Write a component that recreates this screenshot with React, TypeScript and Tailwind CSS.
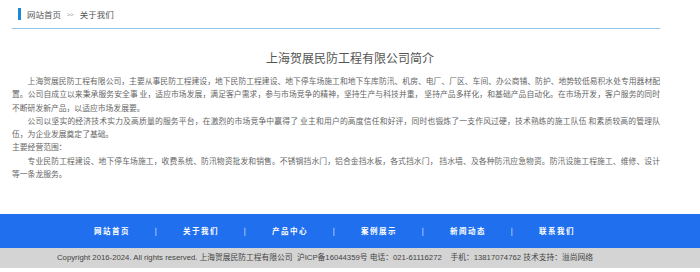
import React from 'react';

const NAV = ['网站首页', '关于我们', '产品中心', '案例展示', '新闻动态', '联系我们'];

const cjk = "font-['Noto_Sans_CJK_SC',sans-serif]";

const App: React.FC = () => {
  return (
    <div className={`w-[700px] h-[272px] flex flex-col bg-white ${cjk}`}>
      <main className="flex-1">
        {/* Breadcrumb */}
        <div className="ml-[12px] w-[648px] h-[29px] pt-[8px] border-b-[1.5px] border-[#8ec5e8]">
          <div className="ml-[6px] flex items-center h-[12px] border-l-[3px] border-[#1a8ad4] pl-[6px] text-[8.5px] text-[#555]">
            <span>网站首页</span>
            <span className="mx-[6px] text-[6px] text-[#999]">&gt;&gt;</span>
            <span>关于我们</span>
          </div>
        </div>

        {/* Intro */}
        <h1 className="mt-[22px] text-center text-[12px] leading-[14px] text-[#555]">上海贺展民防工程有限公司简介</h1>
        <div className="ml-[12px] w-[648px] mt-[9px] text-[7.8px] leading-[13.3px] text-[#666] text-justify">
          <p className="indent-[2em]">
            上海贺展民防工程有限公司，主要从事民防工程建设，地下民防工程建设、地下停车场施工和地下车库防汛、机房、电厂、厂区、车间、办公商铺、防护、地势较低易积水处专用器材配置。公司自成立以来秉承服务安全事 业，适应市场发展，满足客户需求，参与市场竞争的精神，坚持生产与科技并重， 坚持产品多样化，和基础产品自动化。在市场开发，客户服务的同时不断研发新产品，以适应市场发展要。
          </p>
          <p className="indent-[2em]">
            公司以坚实的经济技术实力及高质量的服务平台，在激烈的市场竞争中赢得了 业主和用户的高度信任和好评，同时也锻炼了一支作风过硬，技术熟练的施工队伍 和素质较高的管理队伍，为企业发展奠定了基础。
          </p>
          <p>主要经营范围：</p>
          <p className="indent-[2em]">
            专业民防工程建设、地下停车场施工，收费系统、防汛物资批发和销售。不锈钢挡水门，铝合金挡水板，各式挡水门， 挡水墙、及各种防汛应急物资。防汛设施工程施工、维修、设计等一条龙服务。
          </p>
        </div>
      </main>

      {/* Footer */}
      <footer className="pb-[4px]">
        <nav className="h-[34px] bg-[#1f6fee] flex items-center pl-[82px] text-white text-[7.5px] font-semibold tracking-[1.5px]">
          {NAV.map((item, i) => (
            <React.Fragment key={item}>
              {i > 0 && <span className="w-[29px] text-center font-normal">|</span>}
              <span className="w-[60px] text-center">{item}</span>
            </React.Fragment>
          ))}
        </nav>
        <div className="h-[20px] bg-[#d4d4d4] flex items-center justify-center pr-[50px] text-[7.75px] text-[#444] whitespace-pre font-['Liberation_Sans','Noto_Sans_CJK_SC',sans-serif]">
          Copyright 2016-2024. All rights reserved. 上海贺展民防工程有限公司  沪ICP备16044359号 电话：021-61116272    手机：13817074762 技术支持：溢尚网络
        </div>
      </footer>
    </div>
  );
};

export default App;
